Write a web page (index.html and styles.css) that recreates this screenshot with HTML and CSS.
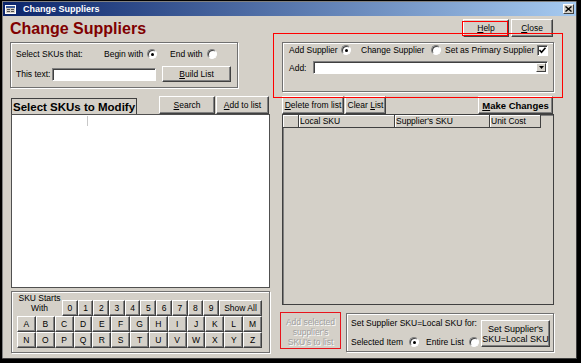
FILE: index.html
```html
<!DOCTYPE html>
<html>
<head>
  <title>Change Suppliers</title>
  <link rel="stylesheet" href="styles.css">
</head>
<body>
  <div class="window">
    <div class="titlebar">
      <svg class="app-icon" width="11" height="9" viewBox="0 0 11 9">
        <rect x="0.5" y="0.5" width="10" height="8" fill="#d4d0c8" stroke="#fff"/>
        <rect x="1" y="1" width="9" height="2" fill="#3a5a9a"/>
        <path d="M2 4.5h3M2 6.5h3M6 4.5h3M6 6.5h3" stroke="#505050"/>
      </svg>
      <span class="title">Change Suppliers</span>
      <span class="title-close">
        <svg width="7" height="6" viewBox="0 0 7 6"><path d="M0.5 0.5l6 5M6.5 0.5l-6 5" stroke="#000" stroke-width="1.4"/></svg>
      </span>
    </div>

    <div class="form">
      <div class="header">
        <h1>Change Suppliers</h1>
        <div class="header-buttons">
          <button class="btn btn-help"><u>H</u>elp</button>
          <button class="btn btn-close"><u>C</u>lose</button>
        </div>
      </div>

      <div class="columns">
        <!-- left side: SKU selection -->
        <div class="col-left">
          <div class="group group-filter">
            <div class="row row-match">
              <span class="lbl-select">Select SKUs that:</span>
              <span class="opt-text w-begin">Begin with</span><span class="radio on"></span>
              <span class="opt-text w-end">End with</span><span class="radio"></span>
            </div>
            <div class="row row-text">
              <span class="lbl-text">This text:</span>
              <span class="textbox"></span>
              <button class="btn btn-build"><u>B</u>uild List</button>
            </div>
          </div>

          <div class="toolbar">
            <div class="list-caption">Select SKUs to Modify</div>
            <button class="btn btn-search"><u>S</u>earch</button>
            <button class="btn btn-add"><u>A</u>dd to list</button>
          </div>
          <div class="sku-list"><span class="caret"></span></div>

          <div class="group group-starts">
            <div class="starts-top">
              <div class="starts-label">SKU Starts<br>With</div>
              <div class="digits">
                <button class="btn key">0</button>
                <button class="btn key">1</button>
                <button class="btn key">2</button>
                <button class="btn key">3</button>
                <button class="btn key">4</button>
                <button class="btn key">5</button>
                <button class="btn key">6</button>
                <button class="btn key">7</button>
                <button class="btn key">8</button>
                <button class="btn key">9</button>
                <button class="btn key">Show All</button>
              </div>
            </div>
            <div class="letters">
              <button class="btn key">A</button>
              <button class="btn key">B</button>
              <button class="btn key">C</button>
              <button class="btn key">D</button>
              <button class="btn key">E</button>
              <button class="btn key">F</button>
              <button class="btn key">G</button>
              <button class="btn key">H</button>
              <button class="btn key">I</button>
              <button class="btn key">J</button>
              <button class="btn key">K</button>
              <button class="btn key">L</button>
              <button class="btn key">M</button>
              <button class="btn key">N</button>
              <button class="btn key">O</button>
              <button class="btn key">P</button>
              <button class="btn key">Q</button>
              <button class="btn key">R</button>
              <button class="btn key">S</button>
              <button class="btn key">T</button>
              <button class="btn key">U</button>
              <button class="btn key">V</button>
              <button class="btn key">W</button>
              <button class="btn key">X</button>
              <button class="btn key">Y</button>
              <button class="btn key">Z</button>
            </div>
          </div>
        </div>

        <!-- right side: supplier changes -->
        <div class="col-right">
          <div class="group group-supplier">
            <div class="row row-mode">
              <span class="opt-text w-addsup">Add Supplier</span><span class="radio on"></span>
              <span class="opt-text w-change">Change Supplier</span><span class="radio"></span>
              <span class="opt-text w-primary">Set as Primary Supplier</span><span class="checkbox">
                <svg width="9" height="9" viewBox="0 0 9 9"><path d="M1.5 4l2 2.2L7.5 1.8" fill="none" stroke="#000" stroke-width="1.6"/></svg>
              </span>
            </div>
            <div class="row row-add">
              <span class="lbl-add">Add:</span>
              <span class="combo">
                <span class="combo-btn">
                  <svg width="5" height="3" viewBox="0 0 5 3"><path d="M0 0h5L2.5 3z" fill="#000"/></svg>
                </span>
              </span>
            </div>
          </div>

          <div class="toolbar toolbar-right">
            <button class="btn btn-delete"><u>D</u>elete from list</button>
            <button class="btn btn-clear">Clear <u>L</u>ist</button>
            <button class="btn btn-make"><u>M</u>ake Changes</button>
          </div>

          <div class="datasheet">
            <div class="ds-head">
              <span class="ds-cell ds-sel"></span>
              <span class="ds-cell ds-local">Local SKU</span>
              <span class="ds-cell ds-supp">Supplier's SKU</span>
              <span class="ds-cell ds-cost">Unit Cost</span>
            </div>
          </div>

          <div class="bottom-row">
            <button class="btn btn-disabled">Add selected<br>supplier's<br>SKU's to list</button>
            <div class="group group-set">
              <div class="set-left">
                <div class="set-caption">Set Supplier SKU=Local SKU for:</div>
                <div class="row row-scope">
                  <span class="opt-text w-selected">Selected Item</span><span class="radio on"></span>
                  <span class="opt-text w-entire">Entire List</span><span class="radio"></span>
                </div>
              </div>
              <button class="btn btn-setsku">Set Supplier's<br>SKU=Local SKU</button>
            </div>
          </div>
        </div>
      </div>
    </div>

    <!-- red annotation marks -->
    <div class="mark mark-help"></div>
    <div class="mark mark-supplier"></div>
  </div>
</body>
</html>
```

FILE: styles.css
```css
body {
    margin: 0;
    background: #000;
    font: 8.5px "Liberation Sans", Arial, sans-serif;
    color: #000;
}

.window {
    position: relative;
    width: 575px;
    height: 358px;
    margin: 1px 0 0 2px;
    padding: 1px;
    box-sizing: border-box;
    background: #d4d0c8;
    box-shadow: inset -1px -1px 0 #404040, inset 1px 1px 0 #808080;
}

/* title bar */
.titlebar {
    height: 14px;
    display: flex;
    align-items: center;
    padding-left: 2px;
    background: linear-gradient(to right, #0a246a, #a6caf0);
}

.app-icon {
    display: block;
}

.title {
    margin-left: 7px;
    color: #fff;
    font: bold 9px "Liberation Sans", Arial, sans-serif;
}

.title-close {
    margin-left: auto;
    margin-right: 2px;
    width: 11px;
    height: 10px;
    box-sizing: border-box;
    display: flex;
    align-items: center;
    justify-content: center;
    background: #d4d0c8;
    border: 1px solid;
    border-color: #fff #404040 #404040 #fff;
}

/* form */
.form {
    padding-left: 7px;
    width: 544px;
}

.header {
    margin-top: 3px;
    height: 19px;
    display: flex;
    justify-content: space-between;
}

h1 {
    margin: 0;
    font: bold 16px/20px "Liberation Sans", Arial, sans-serif;
    color: #800000;
}

.header-buttons {
    display: flex;
    gap: 2px;
    margin-right: 1px;
}

.btn {
    padding: 0;
    box-sizing: border-box;
    background: #d4d0c8;
    border: 1px solid;
    border-color: #fff #404040 #404040 #fff;
    box-shadow: inset -1px -1px 0 #808080;
    font: 8.5px "Liberation Sans", Arial, sans-serif;
    color: #000;
    text-align: center;
}

.btn-help { width: 46px; height: 18px; }
.btn-close { width: 42px; height: 18px; }

.columns {
    display: flex;
    gap: 10px;
}

.col-left {
    width: 260px;
}

.col-right {
    width: 274px;
}

/* group boxes */
.group {
    box-sizing: border-box;
    border: 1px solid #707070;
    box-shadow: 1px 1px 0 #fff, inset 1px 1px 0 #fff;
}

.row {
    display: flex;
    align-items: center;
}

.radio {
    position: relative;
    width: 10px;
    height: 10px;
    flex: none;
    box-sizing: border-box;
    border-radius: 50%;
    background: #fff;
    border: 1px solid;
    border-color: #808080 #fff #fff #808080;
    box-shadow: inset 1px 1px 0 #404040;
}

.radio.on::after {
    content: "";
    position: absolute;
    left: 2.5px;
    top: 2.5px;
    width: 3px;
    height: 3px;
    border-radius: 50%;
    background: #000;
}

.checkbox {
    width: 11px;
    height: 11px;
    box-sizing: border-box;
    background: #fff;
    border: 1px solid;
    border-color: #808080 #fff #fff #808080;
    box-shadow: inset 1px 1px 0 #404040;
    display: flex;
    align-items: center;
    justify-content: center;
}

.textbox, .combo {
    box-sizing: border-box;
    background: #fff;
    border: 1px solid;
    border-color: #808080 #fff #fff #808080;
    box-shadow: inset 1px 1px 0 #404040;
}

.group-filter {
    margin-top: 4px;
    width: 228px;
    height: 46px;
    padding-left: 5px;
}

.row-match {
    margin-top: 5px;
    height: 12px;
}

.lbl-select { width: 88px; }
.w-begin { width: 43px; }
.w-end { width: 37px; margin-left: 13px; }

.row-text {
    margin-top: 6px;
    height: 16px;
}

.lbl-text { width: 36px; }

.textbox {
    width: 104px;
    height: 13px;
}

.btn-build {
    margin-left: 6px;
    width: 69px;
    height: 16px;
}

/* list area */
.toolbar {
    margin-top: 8px;
    height: 18px;
    display: flex;
    align-items: flex-end;
}

.list-caption {
    margin-left: 1px;
    width: 126px;
    height: 16px;
    box-sizing: border-box;
    border: 1px solid #404040;
    border-bottom: none;
    padding-left: 1px;
    font: bold 11.5px/16px "Liberation Sans", Arial, sans-serif;
}

.btn-search {
    margin-left: 22px;
    width: 56px;
    height: 18px;
}

.btn-add {
    margin-left: 1px;
    width: 53px;
    height: 18px;
}

.sku-list {
    margin-left: 1px;
    width: 259px;
    height: 174px;
    box-sizing: border-box;
    background: #fff;
    border: 1px solid #505050;
}

.caret {
    display: block;
    margin: 1px 0 0 75px;
    width: 1px;
    height: 10px;
    background: #c8c8c8;
}

.group-starts {
    margin: 3px 0 0 1px;
    width: 259px;
    height: 62px;
    padding-left: 5px;
}

.starts-top {
    height: 24px;
    display: flex;
    align-items: flex-end;
}

.starts-label {
    width: 45px;
    line-height: 10px;
    padding-bottom: 3px;
    text-align: center;
}

.digits {
    width: 200px;
    display: grid;
    grid-template-columns: repeat(10, 1fr) 43px;
}

.letters {
    width: 245px;
    display: grid;
    grid-template-columns: repeat(13, 1fr);
}

.key {
    height: 16px;
}

/* supplier area */
.group-supplier {
    margin: 4px 0 0 2px;
    width: 272px;
    height: 50px;
    padding-left: 6px;
}

.row-mode {
    margin-top: 1px;
    height: 12px;
}

.w-addsup { width: 52px; }
.w-change { width: 70px; margin-left: 10px; }
.w-primary { width: 92px; margin-left: 4px; }

.row-add {
    margin-top: 5px;
    height: 13px;
}

.lbl-add { width: 24px; }

.combo {
    width: 235px;
    height: 13px;
    display: flex;
    justify-content: flex-end;
    padding: 1px;
}

.combo-btn {
    width: 10px;
    box-sizing: border-box;
    background: #d4d0c8;
    border: 1px solid;
    border-color: #fff #404040 #404040 #fff;
    display: flex;
    align-items: center;
    justify-content: center;
}

.toolbar-right {
    margin-top: 4px;
}

.btn-delete {
    margin-left: 2px;
    width: 62px;
    height: 18px;
}

.btn-clear {
    margin-left: 1px;
    width: 41px;
    height: 18px;
}

.btn-make {
    margin-left: auto;
    margin-right: 1px;
    width: 75px;
    height: 18px;
    font-weight: bold;
    font-size: 9.5px;
}

.datasheet {
    margin-left: 2px;
    width: 272px;
    height: 191px;
    box-sizing: border-box;
    border: 1px solid #404040;
    box-shadow: inset 1px 1px 0 #808080;
}

.ds-head {
    display: flex;
    height: 13px;
}

.ds-cell {
    box-sizing: border-box;
    height: 13px;
    border-right: 1px solid #404040;
    border-bottom: 1px solid #404040;
    padding-left: 1px;
    line-height: 12px;
    box-shadow: inset 1px 1px 0 #fff;
}

.ds-sel { width: 16px; }
.ds-local { width: 96px; }
.ds-supp { width: 95px; }
.ds-cost { width: 51px; }

.bottom-row {
    margin-top: 6px;
    display: flex;
    align-items: flex-start;
}

.btn-disabled {
    margin-top: 1px;
    width: 61px;
    height: 37px;
    padding-top: 2px;
    line-height: 10px;
    color: #a0a0a0;
    text-shadow: 1px 1px 0 #fff;
    border: 1px solid #e8141c;
    box-shadow: none;
}

.group-set {
    margin: 2px 0 0 5px;
    width: 208px;
    height: 39px;
    padding-left: 4px;
    display: flex;
    align-items: flex-start;
}

.set-left {
    width: 130px;
}

.set-caption {
    margin-top: 3px;
    line-height: 12px;
}

.row-scope {
    margin-top: 7px;
    height: 12px;
}

.w-selected { width: 58px; }
.w-entire { width: 43px; margin-left: 7px; }

.btn-setsku {
    margin-top: 6px;
    width: 69px;
    height: 27px;
    line-height: 10px;
    font-size: 9px;
}

/* red annotation marks */
.mark {
    position: absolute;
    border: 1px solid #f00;
    pointer-events: none;
}

.mark-help {
    left: 460px;
    top: 20px;
    width: 44px;
    height: 13px;
}

.mark-supplier {
    left: 271px;
    top: 32px;
    width: 288px;
    height: 63px;
}
```
